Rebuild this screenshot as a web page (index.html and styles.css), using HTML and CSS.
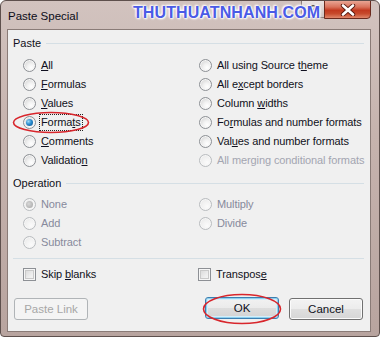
FILE: index.html
```html
<!DOCTYPE html>
<html>
<head>
<meta charset="utf-8">
<link rel="stylesheet" href="styles.css">
</head>
<body>
<div class="window">
  <div class="titlebar">
    <span class="title">Paste Special</span>
  </div>
  <div class="controls">
    <span class="btn-help">?</span>
    <span class="btn-close"><svg width="20" height="12" viewBox="0 0 20 12"><path d="M5 1.5 L15 10.5 M15 1.5 L5 10.5" stroke="#5a1a10" stroke-width="4.4" stroke-linecap="round"/><path d="M5 1.5 L15 10.5 M15 1.5 L5 10.5" stroke="#ffffff" stroke-width="2.6" stroke-linecap="round"/></svg></span>
  </div>
  <span class="watermark">THUTHUATNHANH.COM</span>

  <div class="client">
    <div class="group-head"><span>Paste</span><i class="rule"></i></div>
    <div class="options">
      <div class="opt"><span class="radio"></span><span class="lbl"><u>A</u>ll</span></div>
      <div class="opt"><span class="radio"></span><span class="lbl">All using Source t<u>h</u>eme</span></div>
      <div class="opt"><span class="radio"></span><span class="lbl"><u>F</u>ormulas</span></div>
      <div class="opt"><span class="radio"></span><span class="lbl">All e<u>x</u>cept borders</span></div>
      <div class="opt"><span class="radio"></span><span class="lbl"><u>V</u>alues</span></div>
      <div class="opt"><span class="radio"></span><span class="lbl">Column <u>w</u>idths</span></div>
      <div class="opt"><span class="radio checked"></span><span class="lbl focus">Forma<u>t</u>s</span></div>
      <div class="opt"><span class="radio"></span><span class="lbl">Fo<u>r</u>mulas and number formats</span></div>
      <div class="opt"><span class="radio"></span><span class="lbl"><u>C</u>omments</span></div>
      <div class="opt"><span class="radio"></span><span class="lbl">Val<u>u</u>es and number formats</span></div>
      <div class="opt"><span class="radio"></span><span class="lbl">Validatio<u>n</u></span></div>
      <div class="opt disabled light"><span class="radio"></span><span class="lbl">All merging conditional formats</span></div>
    </div>

    <div class="group-head"><span>Operation</span><i class="rule"></i></div>
    <div class="options ops">
      <div class="opt disabled"><span class="radio checked"></span><span class="lbl">None</span></div>
      <div class="opt disabled"><span class="radio"></span><span class="lbl">Multiply</span></div>
      <div class="opt disabled"><span class="radio"></span><span class="lbl">Add</span></div>
      <div class="opt disabled"><span class="radio"></span><span class="lbl">Divide</span></div>
      <div class="opt disabled"><span class="radio"></span><span class="lbl">Subtract</span></div>
    </div>

    <div class="separator"></div>

    <div class="options checks">
      <div class="opt"><span class="check"></span><span class="lbl">Skip <u>b</u>lanks</span></div>
      <div class="opt"><span class="check"></span><span class="lbl">Transpos<u>e</u></span></div>
    </div>

    <div class="buttons">
      <span class="btn disabled">Paste Link</span>
      <span class="spacer"></span>
      <span class="btn default">OK</span>
      <span class="btn">Cancel</span>
    </div>
  </div>

  <svg class="mark mark-formats" width="78" height="23" viewBox="0 0 78 23"><ellipse cx="39" cy="11.5" rx="37.5" ry="10" fill="none" stroke="#d8262c" stroke-width="1.6"/></svg>
  <svg class="mark mark-ok" width="80" height="32" viewBox="0 0 80 32"><ellipse cx="40" cy="16" rx="38.5" ry="14.5" fill="none" stroke="#d8262c" stroke-width="1.6"/></svg>
</div>
</body>
</html>
```

FILE: styles.css
```css
html, body {
  margin: 0;
  padding: 0;
  background: #ffffff;
}

.window {
  position: relative;
  width: 380px;
  height: 337px;
  box-sizing: border-box;
  border: 1px solid #5e504d;
  border-radius: 6px 6px 4px 4px;
  padding: 0 8px 4px 6px;
  background: linear-gradient(180deg, #d2c3bf 0%, #c6b3ae 40%, #b8a49f 100%);
  font-family: "Liberation Sans", Arial, sans-serif;
  font-size: 11px;
  color: #101020;
  overflow: hidden;
}

.titlebar {
  height: 28px;
  display: flex;
  align-items: center;
  padding-left: 1px;
}

.title {
  font-size: 11.5px;
  color: #0c0c18;
  margin-top: 2px;
}

.controls {
  position: absolute;
  top: -1px;
  right: 8px;
  display: flex;
}

.btn-help {
  width: 23px;
  height: 18px;
  box-sizing: border-box;
  border: 1px solid #8c7f7c;
  border-right: none;
  border-radius: 0 0 0 4px;
  background: linear-gradient(180deg, #ebe4e2, #cfc3c0);
  color: #333;
  font-weight: bold;
  font-size: 11px;
  text-align: center;
  line-height: 16px;
}

.btn-close {
  width: 47px;
  height: 19px;
  box-sizing: border-box;
  border: 1px solid #6b2a1e;
  border-radius: 0 0 4px 0;
  background: linear-gradient(180deg, #e9a594 0%, #d9735c 35%, #c2391f 55%, #c74a2c 75%, #e0866a 100%);
  display: flex;
  align-items: center;
  justify-content: center;
}

.watermark {
  position: absolute;
  left: 132px;
  top: 3px;
  font-family: "Liberation Sans", Arial, sans-serif;
  font-weight: bold;
  font-size: 16px;
  color: #4a5be6;
  letter-spacing: 0.1px;
  text-shadow: 0 0 1px #fff, 0 0 2px #fff, 0 0 3px #fff, 1px 1px 2px #fff, -1px -1px 2px #fff;
}

.client {
  height: 303px;
  box-sizing: border-box;
  border: 1px solid #8a7b77;
  background: #f0f0f0;
  padding: 0 6px 0 5px;
}

.group-head {
  display: flex;
  align-items: center;
  height: 14px;
  margin-top: 6px;
  font-size: 11px;
  color: #101020;
}

.group-head .rule {
  flex: 1;
  height: 1px;
  margin-left: 5px;
  margin-top: 1px;
  background: #d5dfe5;
}

.options {
  display: grid;
  grid-template-columns: 176px 1fr;
  grid-auto-rows: 19px;
  margin-top: 6px;
  padding-left: 10px;
  letter-spacing: -0.1px;
}

.ops {
  margin-top: 5px;
}

.opt {
  display: flex;
  align-items: center;
  white-space: nowrap;
}

.opt .lbl {
  margin-left: 3px;
  padding: 1px 1px;
  border: 1px solid transparent;
  line-height: 13px;
}

.opt .lbl.focus {
  border: 1px dotted #222;
}

.opt u {
  text-underline-offset: 1px;
}

.radio {
  width: 13px;
  height: 13px;
  box-sizing: border-box;
  border: 1px solid #8d9095;
  border-radius: 50%;
  background: radial-gradient(circle at 65% 70%, #ffffff 0%, #f2f2f2 35%, #d6d6d6 80%, #cfcfcf 100%);
  box-shadow: inset 0 0 0 1px #f6f6f6;
  position: relative;
  flex: none;
}

.radio.checked::after {
  content: "";
  position: absolute;
  left: 2px;
  top: 2px;
  width: 7px;
  height: 7px;
  border-radius: 50%;
  background: radial-gradient(circle at 35% 35%, #9fdcf7 0%, #2a8ccf 45%, #0c4e86 100%);
}

.disabled .radio {
  border-color: #b9bcbf;
  background: radial-gradient(circle at 65% 70%, #fbfbfb 0%, #f1f1f1 50%, #e4e4e4 100%);
}

.disabled .radio.checked::after {
  background: radial-gradient(circle at 40% 40%, #d8d8d8 0%, #a4a4a4 100%);
}

.disabled .lbl {
  color: #878a9c;
}

.disabled.light .lbl {
  color: #a3a5b0;
}

.separator {
  height: 1px;
  background: #d5dfe5;
  margin-top: 6px;
}

.checks {
  margin-top: 6px;
  grid-template-columns: 175px 1fr;
}

.check {
  width: 13px;
  height: 13px;
  box-sizing: border-box;
  border: 1px solid #8d9095;
  background: linear-gradient(135deg, #d4d4d4 0%, #eeeeee 60%, #f8f8f8 100%);
  box-shadow: inset 0 0 0 1px #f6f6f6, inset 0 0 0 2px #c9c9c9;
  flex: none;
}

.buttons {
  display: flex;
  margin-top: 14px;
  padding-left: 1px;
  padding-right: 1px;
  gap: 10px;
}

.spacer {
  flex: 1;
}

.btn {
  width: 74px;
  height: 22px;
  box-sizing: border-box;
  border: 1px solid #707070;
  border-radius: 3px;
  background: linear-gradient(180deg, #f3f3f3 0%, #ececec 48%, #dfdfdf 52%, #d6d6d6 100%);
  box-shadow: inset 0 0 0 1px #fbfbfb;
  display: flex;
  align-items: center;
  justify-content: center;
  font-size: 11.5px;
  color: #101020;
}

.btn.default {
  border-color: #3c7fb1;
  box-shadow: inset 0 0 0 1px #8fd0ee, inset 0 0 0 2px #d4eefa;
  background: linear-gradient(180deg, #f2f2f2 0%, #ebebeb 48%, #dddddd 52%, #d3d3d3 100%);
  margin-top: -1px;
}

.btn.disabled {
  border-color: #b0b4b7;
  background: #f4f4f4;
  box-shadow: none;
  color: #a7a7a7;
}

.mark {
  position: absolute;
}

.mark-formats {
  left: 11px;
  top: 110px;
}

.mark-ok {
  left: 201px;
  top: 292px;
}
```
